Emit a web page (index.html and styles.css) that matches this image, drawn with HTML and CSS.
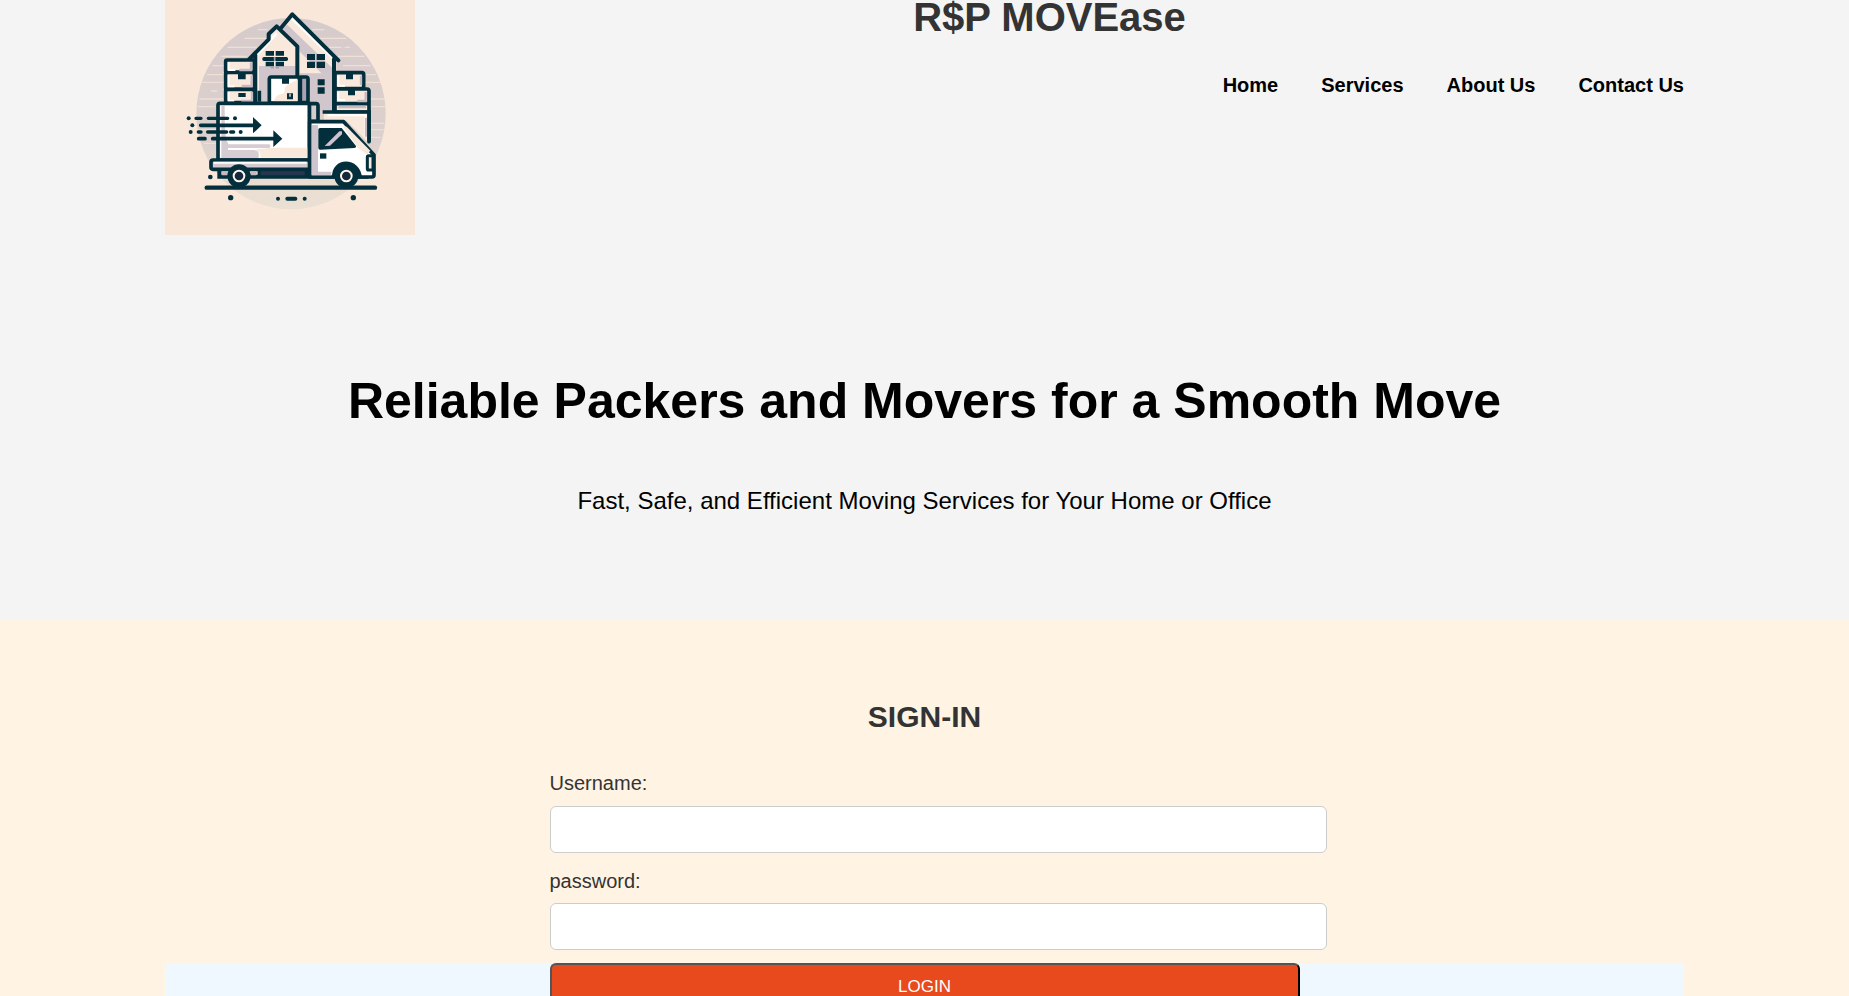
FILE: index.html
```html
<!DOCTYPE html>
<html lang="en">
<head>
<meta charset="utf-8">
<title>R$P MOVEase</title>
<link rel="stylesheet" href="styles.css">
</head>
<body>
<header class="site-header">
  <div class="container header-row">
    <svg class="logo" viewBox="15 0 750 705" role="img" aria-label="Moving truck in front of a house">
      <rect x="15" width="750" height="705" fill="#f9e8da"/>
      <defs>
        <linearGradient id="disc" x1="0" y1="0" x2="0" y2="1">
          <stop offset="0" stop-color="#d6cbcb"/><stop offset=".65" stop-color="#dcd1ce"/><stop offset=".88" stop-color="#eaddd1"/><stop offset="1" stop-color="#ebe0d4"/>
        </linearGradient>
      </defs>
      <ellipse cx="393" cy="341" rx="284" ry="287" fill="url(#disc)"/>
      <g stroke="#f0dfd5" stroke-width="4" stroke-linecap="round" fill="none">
        <path d="M296 89h25M255 115h68M205 142h84M233 142h22M186 169h72M160 197h30M142 224h47M126 247h65M155 273h15M120 297h72M115 320h50M112 389h54M133 430h33M458 89h33M480 115h78M508 142h34M556 142h12M535 169h70M592 169h20M550 197h80M618 224h28M616 247h46M632 297h40M636 320h37M633 370h38M635 389h34M635 412h25"/>
      </g>
      <path d="M364 86L397 47L527 180V334H415V145Z" fill="#f9e8dc"/>
      <path d="M415 138L364 86L382 74L520 207V222H487L420 156Z" fill="#cfc5ca"/>
      <path d="M418 220H520V334H418Z" fill="#d0c6cb"/>
      <path d="M395 55L525 181V325" fill="none" stroke="#fff" stroke-width="7"/>
      <path d="M288 163L328 116V104L350 82L412 142V305H288Z" fill="#f9e8dc"/>
      <path d="M297 198H407V305H297Z" fill="#d0c6cb"/>
      <path d="M291 305V165L350 100" fill="none" stroke="#fff" stroke-width="8"/>
      <g fill="none" stroke="#032e3b" stroke-width="12" stroke-linejoin="round">
        <path d="M267 178L326 118V102L350 79L412 139V230M286 165V305M361 86L397 43L535 181M522 177V334" stroke-linecap="round"/>
      </g>
      <g fill="#032e3b">
        <path d="M317 153h25v14h-25zM347 153h25v14h-25zM317 185h25v14h-25zM347 185h25v14h-25zM441 162h24v18h-24zM470 162h25v18h-25zM441 185h24v19h-24zM470 185h25v19h-25zM473 238h21v18h-21zM473 262h21v19h-21z"/>
        <rect x="307" y="171" width="77" height="12" rx="5"/>
      </g>
      <path d="M344 171v12M332 203h10M347 203h10" stroke="#a59eaa" stroke-width="5"/>
      <g stroke="#032e3b" stroke-width="11" fill="#f9e8dc" stroke-linejoin="round">
        <rect x="197" y="180" width="86" height="37" rx="4"/><rect x="197" y="217" width="86" height="51" rx="4"/><rect x="197" y="268" width="86" height="40" rx="4"/>
        <rect x="525" y="218" width="86" height="48" rx="5"/><path d="M525 267h96q6 0 6 6v152V336H525z"/>
        <path d="M525 311h99M298 305V272" fill="none"/>
        <path d="M421 231h17q6 0 6 6v71h-23z" fill="#aaa2b1"/>
        <rect x="328" y="231" width="90" height="78" rx="6" fill="#fff"/>
      </g>
      <path d="M341 304C352 272 376 290 374 270C373 252 393 250 413 239V304Z" fill="#f9e8dc"/>
      <path d="M206 187v23h20M206 226v33h17M206 276v26h17M535 227v30h20M535 276v24h20" fill="none" stroke="#fff" stroke-width="6"/>
      <path d="M273 187v23h-35M275 226v32h-30M276 276v27h-32M603 227v28M617 276v27h-25M535 321h83" fill="none" stroke="#c5bac2" stroke-width="7"/>
      <path d="M234 216h23v22h-23zM235 279h22v12h-22zM366 233h21v18h-21zM381 280h18v18h-18zM558 219h21v19h-21zM564 268h21v18h-21z" fill="#032e3b"/>
      <path d="M390 281v9" stroke="#f9e8dc" stroke-width="4"/>
      <path d="M492 340H622V425L560 362H492Z" fill="#f9e8dc"/>
      <path d="M488 336H627V425" fill="none" stroke="#032e3b" stroke-width="11"/>
      <path d="M502 346H617V410" fill="none" stroke="#fff" stroke-width="6"/>
      <path d="M618 353V410" stroke="#c5bac2" stroke-width="6"/>
      <path d="M448 311H468q6 0 6 6V364H448z" fill="#d5cbd0" stroke="#032e3b" stroke-width="11"/>
      <path d="M174 316q0-6 6-6H448V480H174Z" fill="#fff" stroke="#032e3b" stroke-width="11" stroke-linejoin="round"/>
      <path d="M184 318V474H295Q302 450 280 450H204V444H328q7-6 0-11H204V428Q194 428 194 330V318Z" fill="#d6ccd1"/>
      <path d="M301 473Q306 451 278 449L338 443H442V473Z" fill="#f9e8dc"/>
      <path d="M204 447H290" stroke="#fff" stroke-width="5"/>
      <rect x="153" y="480" width="296" height="28" rx="6" fill="#d3cad0" stroke="#032e3b" stroke-width="11"/>
      <path d="M161 488H440" stroke="#fff" stroke-width="6"/>
      <path d="M178 510V530H625" fill="none" stroke="#032e3b" stroke-width="12"/>
      <path d="M186 514h22v12h-22zM273 514h16v12h-16z" fill="#c5bac2"/>
      <path d="M293 509H450V534H293z" fill="#032e3b"/><path d="M302 514H434V526H302z" fill="#26384f"/>
      <path d="M449 365H551L642 465V525q0 6-6 6H449Z" fill="#fff" stroke="#032e3b" stroke-width="11" stroke-linejoin="round"/>
      <path d="M456 375H474V515H514V526H456Z" fill="#cec4cd"/>
      <path d="M549 379L560 380L631 452L621 463L593 443Z" fill="#f9e8dc"/>
      <path d="M480 384H545L588 438Q590 443 583 444L480 449Q475 449 475 444V389Q475 384 480 384Z" fill="#032e3b"/>
      <path d="M494 438L538 394H546V403L510 437Z" fill="#cec4cd"/>
      <path d="M480 460h19v16h-19z" fill="#032e3b"/>
      <path d="M516 534C512 468 602 468 606 534Z" fill="#032e3b"/>
      <rect x="622" y="467" width="17" height="43" rx="4" fill="#f9e8dc" stroke="#032e3b" stroke-width="9"/>
      <g fill="#032e3b"><circle cx="237" cy="528" r="35"/><circle cx="559" cy="528" r="36"/></g>
      <g fill="#14293b" stroke="#fff4eb" stroke-width="6"><circle cx="237" cy="528" r="16"/><circle cx="559" cy="528" r="16"/></g>
      <g stroke="#032e3b" fill="none" stroke-linecap="round">
        <path d="M140 563H645" stroke-width="13"/>
        <path d="M122 376H285M158 416H345M116 416H135" stroke-width="11"/>
        <path d="M108 355h15M145 355h58M115 396h8M143 396h57M212 396h9" stroke-width="10"/>
        <path d="M382 596h24" stroke-width="12"/>
      </g>
      <g fill="#032e3b">
        <path d="M279 351L305 376L279 400ZM340 391L367 416L340 441Z"/>
        <circle cx="86" cy="355" r="6"/><circle cx="225" cy="355" r="6"/><circle cx="97" cy="376" r="6"/><circle cx="92" cy="396" r="6"/><circle cx="242" cy="396" r="6"/>
        <circle cx="151" cy="531" r="7"/><circle cx="212" cy="593" r="8"/><circle cx="580" cy="593" r="8"/><circle cx="354" cy="596" r="6"/><circle cx="434" cy="596" r="6"/>
      </g>
    </svg>
    <div class="header-main">
      <h1 class="brand">R$P MOVEase</h1>
      <nav class="nav"><a>Home</a><a>Services</a><a>About Us</a><a>Contact Us</a></nav>
    </div>
  </div>
</header>
<section class="hero">
  <h2 class="hero-title">Reliable Packers and Movers for a Smooth Move</h2>
  <p class="hero-text">Fast, Safe, and Efficient Moving Services for Your Home or Office</p>
</section>
<main class="signin">
  <h2 class="signin-title">SIGN-IN</h2>
  <form class="form">
    <label class="label" for="user">Username:</label>
    <input class="input" id="user" type="text">
    <label class="label label-second" for="pass">password:</label>
    <input class="input input-second" id="pass" type="password">
  </form>
  <div class="container band"><button class="login" type="button">LOGIN</button></div>
</main>
</body>
</html>
```
FILE: styles.css
```css
* { box-sizing: border-box; }
html, body { height: 100%; }
body {
  margin: 0;
  overflow: hidden;
  background: #f4f4f4;
  color: #333;
  font-family: Arial, "Liberation Sans", sans-serif;
}
h1, h2, p { margin: 0; }
.container { width: 1519px; margin: 0 auto; }
.site-header { height: 235px; }
.header-row { display: flex; }
.logo { display: block; flex: none; width: 250px; height: 235px; }
.header-main { flex: 1; display: flex; flex-direction: column; }
.brand {
  text-align: center;
  font-size: 40px;
  line-height: 34px;
}
.nav {
  display: flex;
  justify-content: flex-end;
  gap: 43px;
  margin-top: 39px;
  color: #000;
  font-size: 20px;
  font-weight: 700;
  line-height: 24px;
}
.hero {
  height: 384px;
  padding-top: 137px;
  text-align: center;
  color: #000;
}
.hero-title { font-size: 50px; line-height: 58px; }
.hero-text { margin-top: 57px; font-size: 24px; line-height: 28px; }
.signin {
  height: 377px;
  padding-top: 80px;
  overflow: hidden;
  background: #fff3e3;
}
.signin-title { text-align: center; font-size: 30px; line-height: 36px; }
.form { width: 750px; margin: 36px auto 0; }
.label { display: block; font-size: 20px; line-height: 24px; }
.label-second { margin-top: 16px; }
.input {
  display: block;
  width: 777px;
  height: 47px;
  margin-top: 11px;
  border: 1px solid #ccc;
  border-radius: 6px;
  background: #fff;
}
.input-second { margin-top: 10px; }
.band {
  display: flex;
  justify-content: center;
  height: 60px;
  margin-top: 13px;
  background: #f0f8ff;
}
.login {
  width: 750px;
  height: 48px;
  padding: 0;
  border: 2px outset #000;
  border-radius: 6px;
  background: #e8491d;
  color: #fff;
  font: 17px/20px Arial, "Liberation Sans", sans-serif;
}
```
